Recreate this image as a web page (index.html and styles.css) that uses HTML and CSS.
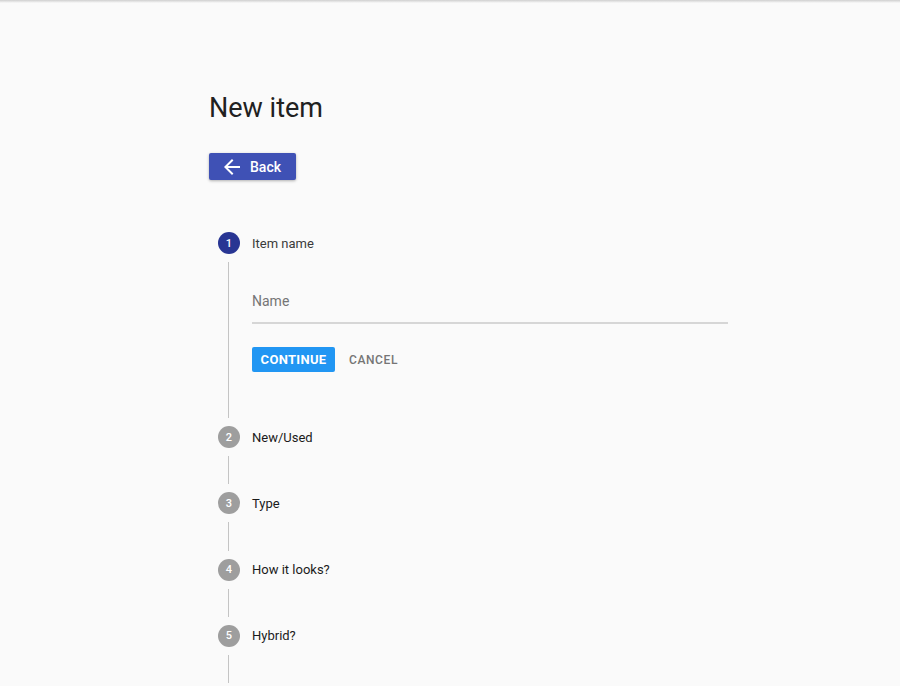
FILE: index.html
```html
<!DOCTYPE html>
<html lang="en">
<head>
    <meta charset="UTF-8">
    <meta name="viewport" content="width=device-width, initial-scale=1.0">
    <title>New item</title>
    <link rel="stylesheet" href="styles.css">
</head>
<body>

<div class="top-shadow"></div>

<div class="page">
    <h1>New item</h1>

    <button type="button" class="back-btn">
        <svg width="24" height="24" viewBox="0 0 24 24" aria-hidden="true">
            <path d="M20 11H7.83l5.59-5.59L12 4l-8 8 8 8 1.41-1.41L7.83 13H20v-2z" fill="#fff"/>
        </svg>
        <span>Back</span>
    </button>

    <div class="stepper">
        <!-- Active step -->
        <div class="step">
            <div class="step-header">
                <div class="step-num active">1</div>
                <div class="step-label first">Item name</div>
            </div>
            <div class="step-body open">
                <div class="field">
                    <input type="text" placeholder="Name">
                </div>
                <div class="actions">
                    <button type="button" class="continue-btn">Continue</button>
                    <button type="button" class="cancel-btn">Cancel</button>
                </div>
            </div>
        </div>

        <div class="step">
            <div class="step-header">
                <div class="step-num">2</div>
                <div class="step-label">New/Used</div>
            </div>
            <div class="step-body"></div>
        </div>

        <div class="step">
            <div class="step-header">
                <div class="step-num">3</div>
                <div class="step-label">Type</div>
            </div>
            <div class="step-body"></div>
        </div>

        <div class="step">
            <div class="step-header">
                <div class="step-num">4</div>
                <div class="step-label">How it looks?</div>
            </div>
            <div class="step-body"></div>
        </div>

        <div class="step">
            <div class="step-header">
                <div class="step-num">5</div>
                <div class="step-label">Hybrid?</div>
            </div>
            <div class="step-body"></div>
        </div>
    </div>
</div>

</body>
</html>
```

FILE: styles.css
```css
body {
    font-family: Roboto, "Liberation Sans", Arial, sans-serif;
    margin: 0;
    padding: 0;
    background-color: #fafafa;
    color: #212121;
    overflow: hidden;
}
.top-shadow {
    height: 3px;
    background: linear-gradient(#cfcfcf, #fafafa);
}
.page {
    padding: 89px 0 0 209px;
}
h1 {
    margin: 0;
    font-size: 27px;
    line-height: 32px;
    font-weight: 400;
    color: #212121;
}
.back-btn {
    display: flex;
    align-items: center;
    gap: 6px;
    margin-top: 29px;
    width: 87px;
    height: 27px;
    padding: 0 0 0 11px;
    border: none;
    border-radius: 2px;
    background-color: #3f51b5;
    color: #fff;
    font-family: inherit;
    font-size: 14px;
    font-weight: 500;
    box-shadow: 0 1px 3px rgba(0,0,0,0.3);
    cursor: pointer;
}
.stepper {
    margin: 52px 0 0 9px;
}
.step-header {
    display: flex;
    align-items: center;
    gap: 12px;
    height: 22px;
}
.step-num {
    width: 22px;
    height: 22px;
    border-radius: 50%;
    background-color: #9e9e9e;
    color: #fff;
    font-size: 11px;
    font-weight: 500;
    display: flex;
    align-items: center;
    justify-content: center;
}
.step-num.active {
    background-color: #283593;
}
.step-label {
    font-size: 13px;
    font-weight: 400;
    color: #1a1a1a;
}
.step-label.first {
    color: #3a3a3a;
}
.step-body {
    margin: 8px 0 8px 10px;
    border-left: 1px solid #c4c4c4;
    height: 28.3px;
}
.step-body.open {
    height: auto;
    padding: 21px 0 46px 23px;
}
.field {
    width: 476px;
    border-bottom: 2px solid #d6d6d6;
}
.field input {
    width: 100%;
    height: 35px;
    padding: 0 0 4px 0;
    border: none;
    background: transparent;
    font-family: inherit;
    font-size: 14px;
    color: #212121;
    outline: none;
}
.field input::placeholder {
    color: #757575;
}
.actions {
    display: flex;
    align-items: center;
    gap: 14px;
    margin-top: 23px;
}
.continue-btn {
    width: 83px;
    height: 25px;
    border: none;
    border-radius: 2px;
    background-color: #2196f3;
    color: #fff;
    font-family: inherit;
    font-size: 13px;
    font-weight: 700;
    text-transform: uppercase;
    letter-spacing: 0.3px;
    cursor: pointer;
}
.cancel-btn {
    border: none;
    background: none;
    padding: 0;
    color: #757575;
    font-family: inherit;
    font-size: 12px;
    font-weight: 500;
    text-transform: uppercase;
    letter-spacing: 0.6px;
    cursor: pointer;
}
```
